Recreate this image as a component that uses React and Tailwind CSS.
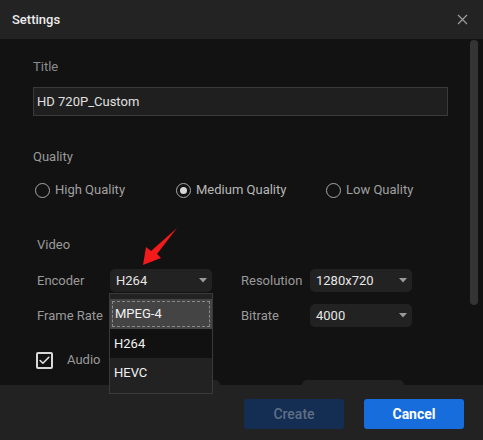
import { Check } from 'lucide-react';

const QUALITIES = [
  { label: 'High Quality', w: 'w-[141px]' },
  { label: 'Medium Quality', w: 'w-[150px]', checked: true },
  { label: 'Low Quality', w: 'w-[110px]' },
];

function Caret() {
  return (
    <svg width="8" height="5" viewBox="0 0 8 5" className="shrink-0">
      <path d="M0 0h8L4 4.5z" fill="#9a9a9a" />
    </svg>
  );
}

function Select({ value }) {
  return (
    <div className="w-[102px] h-[23px] rounded-[5px] bg-[#222222] flex items-center justify-between pl-[6px] pr-[5px] text-[13px] text-[#e6e6e6]">
      <span>{value}</span>
      <Caret />
    </div>
  );
}

function Radio({ label, checked, w }) {
  return (
    <div className={`flex items-center gap-[5px] ${w}`}>
      <span className="w-[15px] h-[15px] rounded-full border-[1.5px] border-[#a8a8a8] flex items-center justify-center">
        {checked && <span className="w-[7px] h-[7px] rounded-full bg-[#d8d8d8]" />}
      </span>
      <span className={checked ? 'text-[#b8b8b8]' : 'text-[#a0a0a0]'}>{label}</span>
    </div>
  );
}

export default function App() {
  return (
    <div
      className="relative w-[483px] h-[440px] bg-[#121212] overflow-hidden flex flex-col"
      style={{ fontFamily: 'Roboto, "Liberation Sans", sans-serif' }}
    >
      {/* Header */}
      <div className="h-[39px] shrink-0 bg-[#232323] flex items-center justify-between pl-[12px] pr-[15px]">
        <span className="text-[13px] font-medium text-[#ececec]">Settings</span>
        <svg width="11" height="11" viewBox="0 0 11 11">
          <path d="M1 1l9 9M10 1l-9 9" stroke="#9a9a9a" strokeWidth="1.3" />
        </svg>
      </div>

      {/* Body */}
      <div className="relative h-[346px] shrink-0 overflow-hidden">
        <div className="pt-[19px] pl-[33px] text-[13px] leading-[18px]">
          <div className="text-[#8c8c8c]">Title</div>
          <div className="mt-[11px] w-[415px] h-[29px] bg-[#1f1f1f] border border-[#3a3a3a] flex items-center pl-[3px] text-[#e0e0e0]">
            HD 720P_Custom
          </div>

          <div className="mt-[32px] text-[#9a9a9a]">Quality</div>
          <div className="mt-[15px] h-[18px] flex items-center pl-[2px]">
            {QUALITIES.map((q) => (
              <Radio key={q.label} {...q} />
            ))}
          </div>

          <div className="mt-[37px] pl-[4px] text-[#9a9a9a]">Video</div>
          <div className="mt-[15px] flex items-center">
            <span className="w-[77px] pl-[4px] text-[#9a9a9a]">Encoder</span>
            <Select value="H264" />
            <span className="w-[98px] pl-[29px] text-[#9a9a9a]">Resolution</span>
            <Select value="1280x720" />
          </div>
          <div className="mt-[12px] flex items-center">
            <span className="w-[77px] pl-[4px] text-[#9a9a9a]">Frame Rate</span>
            {/* hidden under the open encoder list */}
            <Select value="" />
            <span className="w-[98px] pl-[29px] text-[#9a9a9a]">Bitrate</span>
            <Select value="4000" />
          </div>

          <div className="mt-[24px] h-[18px] flex items-center pl-[3px]">
            <span className="w-[17px] h-[17px] rounded-[2px] border-2 border-[#d8d8d8] flex items-center justify-center">
              <Check className="w-[13px] h-[13px] text-[#e0e0e0]" strokeWidth={3} />
            </span>
            <span className="ml-[14px] text-[#9a9a9a]">Audio</span>
          </div>
          <div className="mt-[11px] flex">
            <div className="ml-[77px] w-[110px] h-[23px] rounded-[5px] bg-[#222222]" />
            <div className="ml-[82px] w-[102px] h-[23px] rounded-[5px] bg-[#222222]" />
          </div>
        </div>

        {/* Scrollbar */}
        <div className="absolute left-[470px] top-[1px] w-[8px] h-[265px] rounded-full bg-[#343434]" />
      </div>

      {/* Footer */}
      <div className="flex-1 bg-[#222222] flex justify-end gap-[20px] pt-[14px] pr-[19px]">
        <button className="w-[100px] h-[30px] rounded-[3px] bg-[#142d52] text-[14px] font-medium text-[#5f6f86]">
          Create
        </button>
        <button className="w-[100px] h-[30px] rounded-[3px] bg-[#176ddb] text-[14px] font-bold text-white">
          Cancel
        </button>
      </div>

      {/* Encoder dropdown list */}
      <div className="absolute left-[109px] top-[293px] w-[104px] h-[101px] bg-[#222222] border border-[#3a3a3a] pt-[5px] text-[13px] text-[#f2f2f2]">
        <div className="h-[30px] bg-[#444444] p-[2px]">
          <div className="h-full border border-dashed border-[#8a8a8a] flex items-center pl-[2px]">MPEG-4</div>
        </div>
        <div className="h-[29px] bg-[#111111] flex items-center pl-[4px]">H264</div>
        <div className="h-[30px] flex items-center pl-[4px]">HEVC</div>
      </div>

      {/* Red pointer arrow */}
      <svg className="absolute left-0 top-0 pointer-events-none" width="483" height="440">
        <path d="M177 228 L157 254 L161 258 L143 265 L146 247 L151 251 Z" fill="#f21a1a" />
      </svg>
    </div>
  );
}
